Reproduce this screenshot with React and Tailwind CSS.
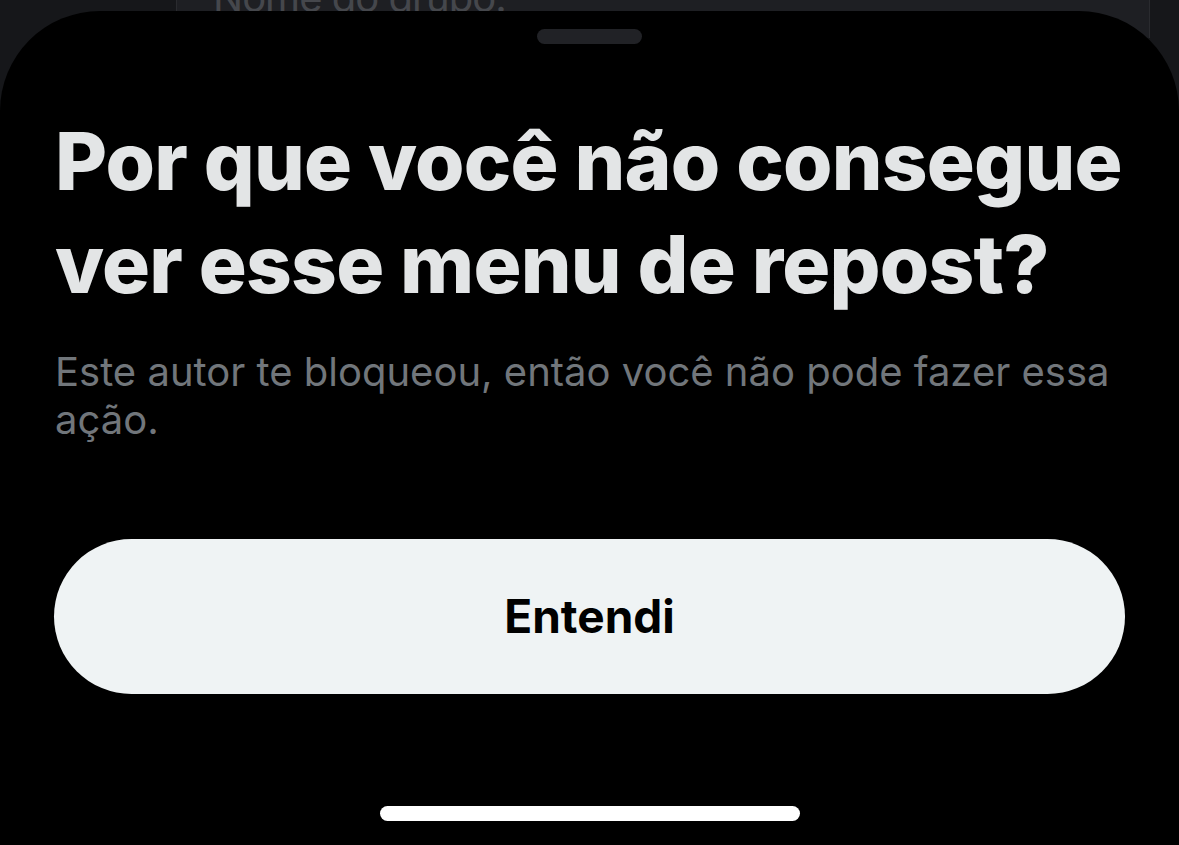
export default function App() {
  return (
    <div
      className="relative w-[1179px] h-[845px] overflow-hidden bg-[#16171a]"
      style={{ fontFamily: "Inter, 'Noto Sans', sans-serif" }}
    >
      {/* background page behind the sheet */}
      <div className="ml-[176px] w-[974px] h-[60px] bg-[#1e1f23] border-l border-r border-[#2a2b2f] pl-[36px] -mt-[22px]">
        <div className="text-[40px] leading-[40px] text-[#45474c] font-normal tracking-tight">Nome do grupo:</div>
      </div>

      {/* bottom sheet */}
      <div className="absolute left-0 right-0 top-[11px] bottom-0 bg-black rounded-t-[100px] flex flex-col">
        <div className="flex justify-center pt-[18px]">
          <div className="w-[105px] h-[15px] rounded-full bg-[#212226]" />
        </div>

        <div className="pl-[55px] pr-[40px] pt-[65px]">
          <h1 className="text-[80px] leading-[103px] font-extrabold text-[#e3e5e6] tracking-[-0.8px]">
            Por que você não consegue ver esse menu de repost?
          </h1>
          <p className="mt-[33px] pr-[20px] text-[40px] leading-[48px] text-[#71767b] font-normal">
            Este autor te bloqueou, então você não pode fazer essa ação.
          </p>
        </div>

        <div className="px-[54px] pt-[95px]">
          <button className="w-full h-[155px] rounded-full bg-[#eff3f4] text-black text-[46px] font-bold flex items-center justify-center">
            Entendi
          </button>
        </div>

        <div className="flex-1" />
        <div className="flex justify-center pb-[24px]">
          <div className="w-[420px] h-[15px] rounded-full bg-white" />
        </div>
      </div>
    </div>
  );
}
